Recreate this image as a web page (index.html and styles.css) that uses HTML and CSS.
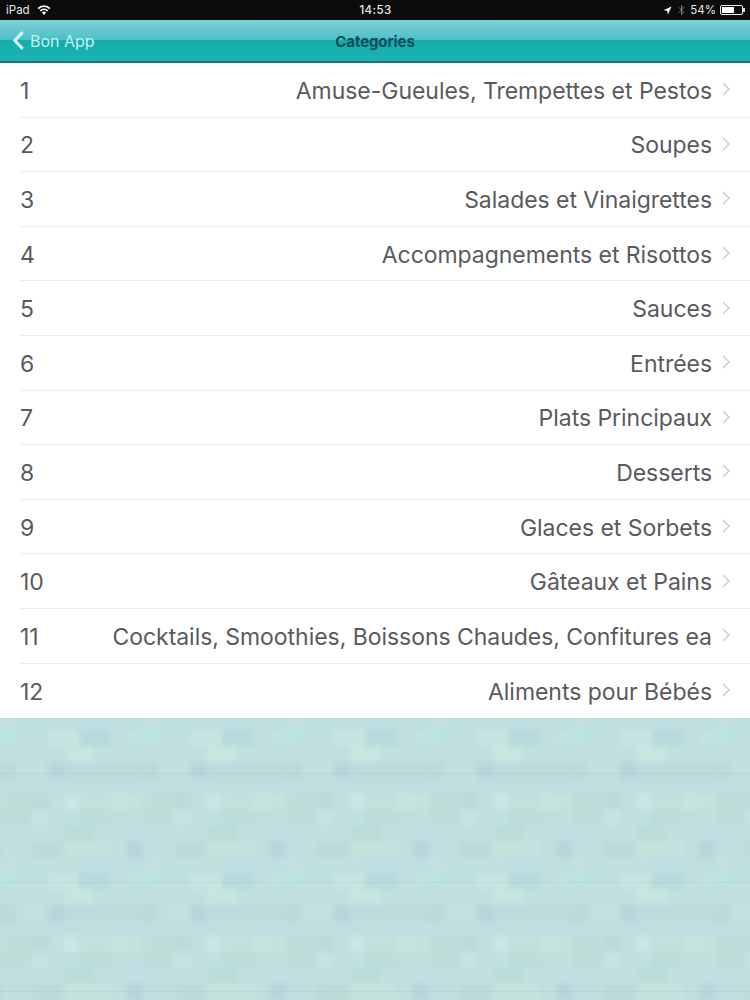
FILE: index.html
```html
<!DOCTYPE html>
<html lang="fr">
<head>
<meta charset="utf-8">
<title>Categories</title>
<link rel="stylesheet" href="styles.css">
</head>
<body>
<div class="screen">
  <header class="status">
    <div class="status-left">
      <span>iPad</span>
      <svg class="wifi" viewBox="0 0 14 10" width="14" height="10"><path d="M7 10 4.9 7.6a3 3 0 0 1 4.2 0zM3.9 6.5 2.7 5.2a6.2 6.2 0 0 1 8.6 0l-1.2 1.3a4.5 4.5 0 0 0-6.2 0zM1.7 4.2.5 2.9a9.3 9.3 0 0 1 13 0l-1.2 1.3a7.6 7.6 0 0 0-10.6 0z" fill="#fff"/></svg>
    </div>
    <div class="status-time">14:53</div>
    <div class="status-right">
      <svg viewBox="0 0 10 10" width="9" height="9"><path d="M9.5.5 5.4 9.5 4.6 5.4.5 4.6z" fill="#fff"/></svg>
      <svg class="bt" viewBox="0 0 8 13" width="7" height="12"><path d="M1 3.5 6.5 9 4 11.500V1.500L6.500 4 1 9.500" fill="none" stroke="#8a8a8a" stroke-width="1"/></svg>
      <span class="percent">54%</span>
      <span class="battery"><span class="battery-fill"></span></span>
      <span class="battery-tip"></span>
    </div>
  </header>
  <nav class="nav">
    <div class="back">
      <svg viewBox="0 0 14 22" width="13" height="21"><path d="M11.500 2 3 11l8.500 9" fill="none" stroke="#d9f5f5" stroke-width="3.200"/></svg>
      <span>Bon App</span>
    </div>
    <div class="nav-title">Categories</div>
  </nav>
  <main class="list">
    <div class="row"><span class="num">1</span><span class="name">Amuse-Gueules, Trempettes et Pestos</span><svg class="chev" viewBox="0 0 9 14"><path d="M1 1l6 6-6 6"/></svg></div>
    <div class="row"><span class="num">2</span><span class="name">Soupes</span><svg class="chev" viewBox="0 0 9 14"><path d="M1 1l6 6-6 6"/></svg></div>
    <div class="row"><span class="num">3</span><span class="name">Salades et Vinaigrettes</span><svg class="chev" viewBox="0 0 9 14"><path d="M1 1l6 6-6 6"/></svg></div>
    <div class="row"><span class="num">4</span><span class="name">Accompagnements et Risottos</span><svg class="chev" viewBox="0 0 9 14"><path d="M1 1l6 6-6 6"/></svg></div>
    <div class="row"><span class="num">5</span><span class="name">Sauces</span><svg class="chev" viewBox="0 0 9 14"><path d="M1 1l6 6-6 6"/></svg></div>
    <div class="row"><span class="num">6</span><span class="name">Entrées</span><svg class="chev" viewBox="0 0 9 14"><path d="M1 1l6 6-6 6"/></svg></div>
    <div class="row"><span class="num">7</span><span class="name">Plats Principaux</span><svg class="chev" viewBox="0 0 9 14"><path d="M1 1l6 6-6 6"/></svg></div>
    <div class="row"><span class="num">8</span><span class="name">Desserts</span><svg class="chev" viewBox="0 0 9 14"><path d="M1 1l6 6-6 6"/></svg></div>
    <div class="row"><span class="num">9</span><span class="name">Glaces et Sorbets</span><svg class="chev" viewBox="0 0 9 14"><path d="M1 1l6 6-6 6"/></svg></div>
    <div class="row"><span class="num">10</span><span class="name">Gâteaux et Pains</span><svg class="chev" viewBox="0 0 9 14"><path d="M1 1l6 6-6 6"/></svg></div>
    <div class="row"><span class="num">11</span><span class="name">Cocktails, Smoothies, Boissons Chaudes, Confitures ea</span><svg class="chev" viewBox="0 0 9 14"><path d="M1 1l6 6-6 6"/></svg></div>
    <div class="row"><span class="num">12</span><span class="name">Aliments pour Bébés</span><svg class="chev" viewBox="0 0 9 14"><path d="M1 1l6 6-6 6"/></svg></div>
  </main>
  <div class="backdrop">
    <svg class="mosaic" width="100%" height="100%">
      <defs>
        <pattern id="tile" x="6" y="2" width="143" height="143" patternUnits="userSpaceOnUse">
          <g shape-rendering="crispEdges" transform="scale(1.589)">
            <rect width="90" height="90" fill="#bfdfdf"/>
            <rect x="0" y="0" width="10" height="10" fill="#c2e0de"/><rect x="50" y="0" width="40" height="10" fill="#bdddde"/>
            <rect x="0" y="10" width="10" height="10" fill="#b8e4e2"/><rect x="10" y="10" width="20" height="10" fill="#bde0de"/><rect x="30" y="10" width="20" height="10" fill="#c7e7e2"/><rect x="50" y="10" width="20" height="10" fill="#b6d8dc"/><rect x="80" y="10" width="10" height="10" fill="#c0e2e2"/>
            <rect x="40" y="20" width="20" height="10" fill="#c8e8e0"/><rect x="0" y="20" width="40" height="10" fill="#c0dfdd"/>
            <rect x="0" y="30" width="10" height="10" fill="#bcd6d6"/><rect x="10" y="30" width="20" height="10" fill="#c3dfde"/><rect x="30" y="30" width="10" height="10" fill="#b2d2d6"/><rect x="40" y="30" width="50" height="10" fill="#b9d9db"/>
            <rect x="0" y="40" width="90" height="10" fill="#bedddf"/>
            <rect x="0" y="50" width="20" height="10" fill="#c0dcd8"/><rect x="20" y="50" width="10" height="10" fill="#b8d8d8"/><rect x="40" y="50" width="10" height="10" fill="#cae8e8"/><rect x="50" y="50" width="20" height="10" fill="#c1e1dc"/><rect x="70" y="50" width="10" height="10" fill="#c8e6dc"/><rect x="80" y="50" width="10" height="10" fill="#c4e4dc"/>
            <rect x="0" y="60" width="20" height="10" fill="#bddcd8"/><rect x="20" y="60" width="10" height="10" fill="#c6e4e4"/><rect x="50" y="60" width="20" height="10" fill="#bcdcd7"/><rect x="70" y="60" width="10" height="10" fill="#bce0da"/>
            <rect x="40" y="70" width="20" height="10" fill="#b9dcd8"/><rect x="70" y="70" width="10" height="10" fill="#c0dce0"/><rect x="80" y="70" width="10" height="10" fill="#c2dce4"/>
            <rect x="0" y="80" width="20" height="10" fill="#bededd"/><rect x="20" y="80" width="20" height="10" fill="#bad9d4"/><rect x="40" y="80" width="30" height="10" fill="#c6e4dc"/><rect x="80" y="80" width="10" height="10" fill="#b8d0d8"/>
          </g>
        </pattern>
      </defs>
      <rect width="100%" height="100%" fill="url(#tile)"/>
    </svg>
  </div>
</div>
</body>
</html>
```
FILE: styles.css
```css
* { box-sizing: border-box; }
html, body { margin: 0; padding: 0; }
body { background: #c0e0e0; font-family: Inter, "Liberation Sans", sans-serif; }
.screen { width: 750px; height: 1000px; display: flex; flex-direction: column; overflow: hidden; }

.status { height: 20px; flex: none; background: #0c0c0c; color: #e8e8e8; font-size: 11.500px; display: grid; grid-template-columns: 1fr auto 1fr; align-items: center; padding: 0 5px 0 6px; }
.status-left { display: flex; align-items: center; gap: 7px; }
.wifi { display: block; }
.status-time { font-weight: 500; letter-spacing: 0.4px; }
.status-right { display: flex; align-items: center; justify-content: flex-end; gap: 6px; }
.percent { margin-left: -1px; }
.battery { width: 23px; height: 10px; border: 1px solid #eee; border-radius: 2px; display: block; padding: 1px; margin-left: -2px; }
.battery-fill { display: block; width: 12px; height: 100%; background: #fff; }
.battery-tip { width: 2px; height: 4px; background: #ddd; margin-left: -6px; }

.nav { height: 43px; flex: none; position: relative; display: flex; align-items: center; justify-content: center; background: linear-gradient(#80d0d6 0, #4cc0c7 48%, #14aeaa 50%, #1cb3b0 100%); border-bottom: 2px solid #1c7478; }
.back { position: absolute; left: 12px; top: 0; bottom: 0; display: flex; align-items: center; gap: 5px; color: #c4f0f0; font-size: 16px; }
.back svg { display: block; }
.nav-title { font-size: 15px; font-weight: 700; color: #0d4a5c; letter-spacing: -0.1px; padding-top: 1px; }

.list { flex: none; background: #fff; }
.row { height: 54.600px; display: flex; align-items: center; margin-left: 20px; padding: 2px 19px 0 0; border-bottom: 1px solid #ececec; font-size: 23px; letter-spacing: -0.04px; color: #5a5a5e; }
.row:last-child { border-bottom: 0; }
.num { flex: none; }
.name { flex: 1; text-align: right; white-space: nowrap; }
.chev { flex: none; width: 9px; height: 14px; margin: -3px 0 0 10px; fill: none; stroke: #cfcfd3; stroke-width: 1.500; }

.backdrop { flex: 1; position: relative; overflow: hidden; background: #c3e2e2; }
.mosaic { position: absolute; inset: -6px; width: calc(100% + 12px); height: calc(100% + 12px); filter: blur(2px); opacity: 0.72; }
.backdrop::after { content: ""; position: absolute; inset: 1px 0 0; background: repeating-linear-gradient(to bottom, transparent 0, transparent 54px, rgba(130, 175, 175, 0.18) 54px, rgba(130, 175, 175, 0.18) 54.600px); }
```
